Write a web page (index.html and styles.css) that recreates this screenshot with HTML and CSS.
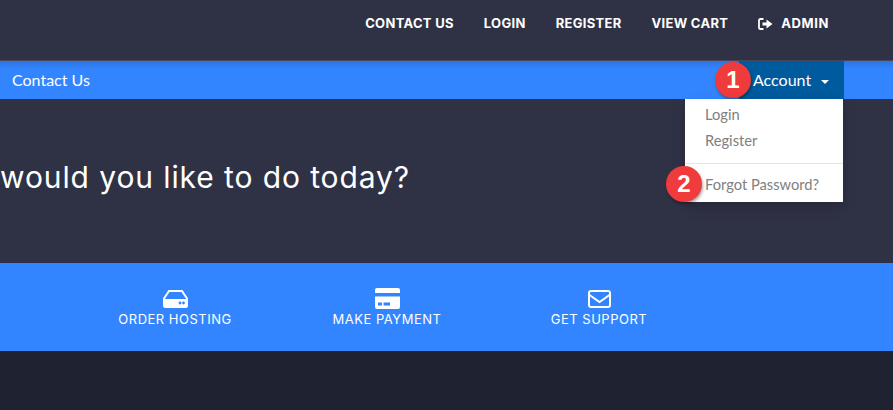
FILE: index.html
```html
<!DOCTYPE html>
<html lang="en">
<head>
    <meta charset="UTF-8">
    <meta name="viewport" content="width=device-width, initial-scale=1.0">
    <title>Contact Us</title>
    <link rel="stylesheet" href="styles.css">
</head>
<body>
    <header class="topbar">
        <a href="#">CONTACT US</a>
        <a href="#">LOGIN</a>
        <a href="#">REGISTER</a>
        <a href="#">VIEW CART</a>
        <a href="#" class="admin">
            <svg width="15" height="12" viewBox="0 0 15 12" fill="none" stroke="#fff" stroke-width="1.8">
                <path d="M5.500 1H2.300A1.300 1.300 0 0 0 1 2.300v7.400A1.300 1.300 0 0 0 2.300 11h3.200"/>
                <path d="M4.500 4.400h4V1.500L14.500 6l-6 4.500V7.600h-4z" fill="#fff" stroke="none"/>
            </svg>
            ADMIN
        </a>
    </header>
    <nav class="navbar">
        <a href="#" class="nav-link">Contact Us</a>
        <div class="account">
            <span class="marker marker-one">1</span>
            <a href="#" class="account-toggle">Account <span class="caret"></span></a>
            <div class="dropdown">
                <a href="#">Login</a>
                <a href="#">Register</a>
                <div class="divider"></div>
                <a href="#">Forgot Password?</a>
                <span class="marker marker-two">2</span>
            </div>
        </div>
    </nav>
    <section class="hero">
        <h1>would you like to do today?</h1>
    </section>
    <section class="actions">
        <a href="#" class="action">
            <div class="action-icon">
                <svg width="25" height="18" viewBox="0 0 25 18">
                    <path d="M6 1h13l5 7.500V15.500A1.500 1.500 0 0 1 22.500 17h-20A1.500 1.500 0 0 1 1 15.500V8.500z" fill="none" stroke="#fff" stroke-width="2"/>
                    <path d="M1 9h23v8H1z" fill="#fff"/>
                    <circle cx="17" cy="13" r="1.400" fill="#3385ff"/>
                    <circle cx="20.500" cy="13" r="1.400" fill="#3385ff"/>
                </svg>
            </div>
            <span>ORDER HOSTING</span>
        </a>
        <a href="#" class="action">
            <div class="action-icon">
                <svg width="25" height="21" viewBox="0 0 25 21">
                    <path d="M2 0h21a2 2 0 0 1 2 2v3H0V2a2 2 0 0 1 2-2z" fill="#fff"/>
                    <path d="M0 8.600h25V19a2 2 0 0 1-2 2H2a2 2 0 0 1-2-2z" fill="#fff"/>
                    <path d="M3 14.500h4v3H3zM8.500 14.500H15v3H8.500z" fill="#3385ff"/>
                </svg>
            </div>
            <span>MAKE PAYMENT</span>
        </a>
        <a href="#" class="action">
            <div class="action-icon">
                <svg width="23" height="18" viewBox="0 0 23 18" fill="none" stroke="#fff" stroke-width="2">
                    <rect x="1" y="1" width="21" height="16" rx="2"/>
                    <path d="M1.500 5l10 7 10-7"/>
                </svg>
            </div>
            <span>GET SUPPORT</span>
        </a>
    </section>
    <div class="bottom"></div>
</body>
</html>
```

FILE: styles.css
```css
body {
    margin: 0;
    height: 410px;
    overflow: hidden;
    background-color: #2f3245;
    color: #fff;
    font-family: "Liberation Sans", Arial, sans-serif;
}
a {
    color: inherit;
    text-decoration: none;
}
.topbar {
    height: 45px;
    display: flex;
    justify-content: flex-end;
    gap: 30px;
    padding: 15px 64px 0 0;
    border-bottom: 1px solid #45485a;
    font-family: Inter, sans-serif;
    font-size: 13px;
    font-weight: 700;
    letter-spacing: 0.3px;
    line-height: 17px;
}
.admin {
    display: flex;
    align-items: center;
    gap: 8px;
    height: 17px;
    letter-spacing: 0.6px;
}
.navbar {
    height: 38px;
    display: flex;
    justify-content: space-between;
    padding-left: 12px;
    background: linear-gradient(#2f74e0, #3385ff 8px);
    font-family: Lato, sans-serif;
    font-size: 16px;
    line-height: 38px;
}
.account {
    position: relative;
    width: 105px;
    margin-right: 49px;
    background-color: #005a9e;
}
.account-toggle {
    display: block;
    padding-left: 14px;
    white-space: nowrap;
}
.caret {
    display: inline-block;
    margin-left: 6px;
    vertical-align: 2px;
    border-top: 4px solid #fff;
    border-left: 4px solid transparent;
    border-right: 4px solid transparent;
}
.dropdown {
    position: absolute;
    top: 38px;
    right: 1px;
    width: 158px;
    height: 103px;
    box-sizing: border-box;
    padding-top: 2px;
    background-color: #fff;
    box-shadow: 0 6px 12px rgba(0, 0, 0, 0.18);
    color: #808080;
    font-size: 14.7px;
    line-height: 26px;
}
.dropdown a {
    display: block;
    padding-left: 20px;
}
.divider {
    height: 1px;
    margin: 10px 0;
    background-color: #e5e5e5;
}
.dropdown .divider + a {
    line-height: 20px;
}
.marker {
    position: absolute;
    width: 36px;
    height: 36px;
    border-radius: 50%;
    background-color: #ef3b3b;
    color: #fff;
    font-family: "Liberation Sans", Arial, sans-serif;
    font-size: 24px;
    font-weight: 700;
    line-height: 36px;
    text-align: center;
    box-shadow: 1px 2px 3px rgba(0, 0, 0, 0.35);
}
.marker-one {
    top: 1px;
    left: -24px;
}
.marker-two {
    top: 67px;
    left: -19px;
}
.hero {
    height: 164px;
    box-sizing: border-box;
    padding-top: 58px;
}
.hero h1 {
    margin: 0;
    font-family: Inter, sans-serif;
    font-size: 30px;
    font-weight: 400;
    letter-spacing: 0.9px;
    line-height: 40px;
    white-space: nowrap;
}
.actions {
    height: 88px;
    display: flex;
    gap: 32px;
    padding-left: 85px;
    background-color: #3385ff;
    font-family: Inter, sans-serif;
    font-size: 13px;
    letter-spacing: 0.5px;
}
.action {
    display: flex;
    flex-direction: column;
    align-items: center;
    width: 180px;
    padding-top: 25px;
}
.action-icon {
    height: 21px;
    display: flex;
    align-items: center;
}
.action span {
    margin-top: 1px;
    line-height: 18px;
}
.bottom {
    height: 59px;
    background-color: #1f2231;
}
```
